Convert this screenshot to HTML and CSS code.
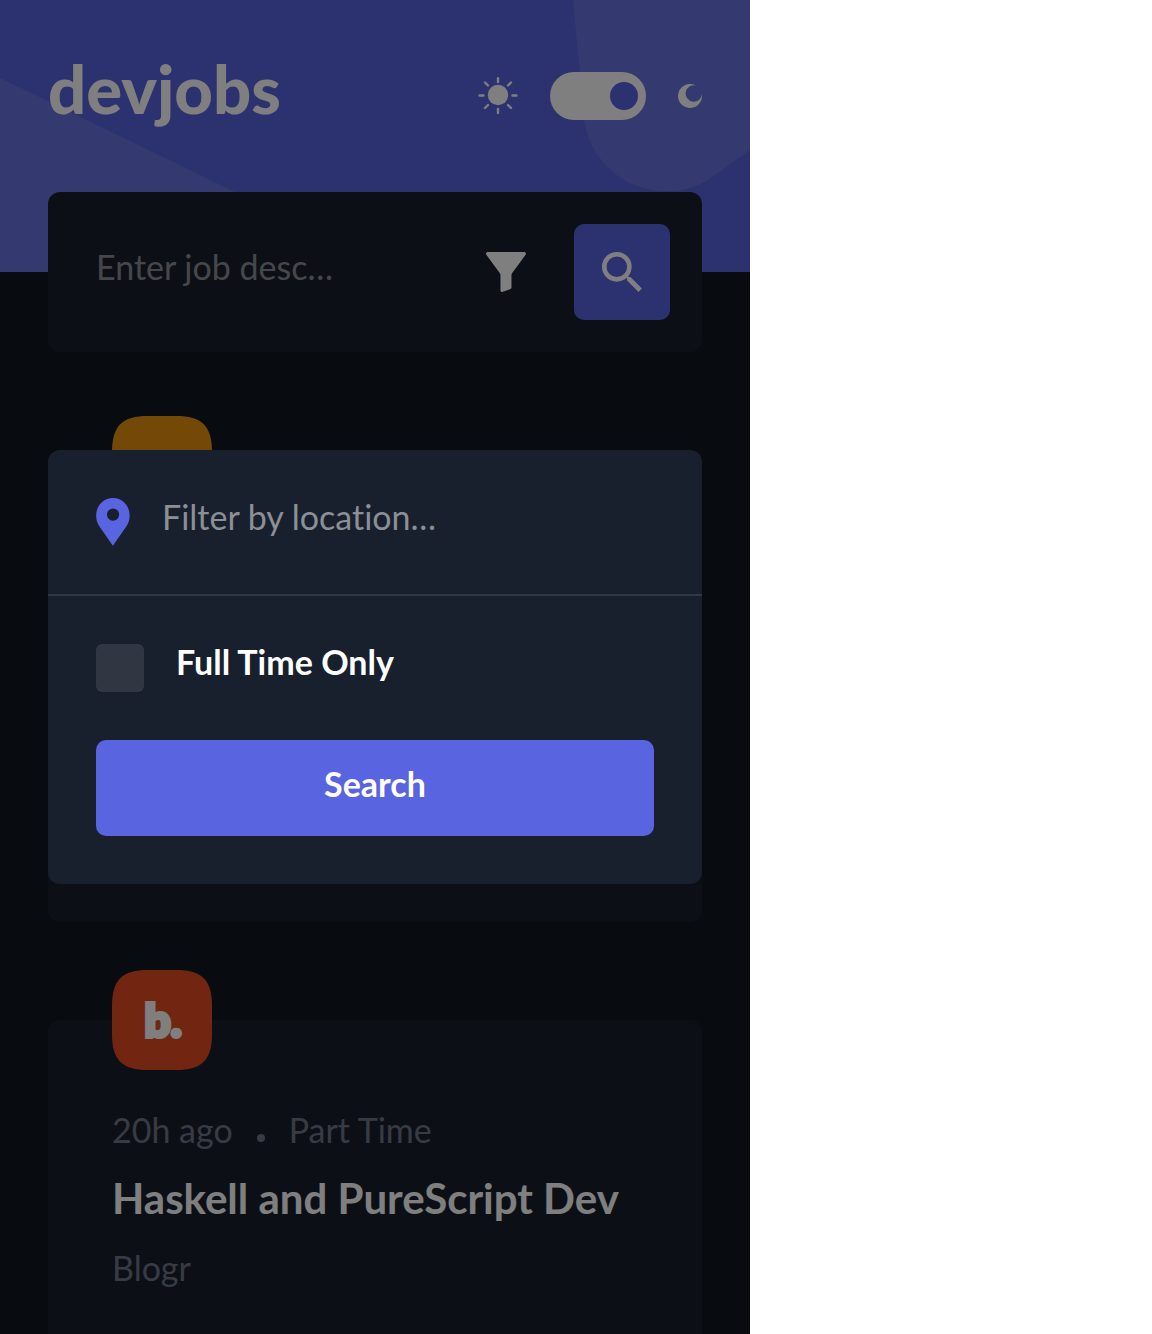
FILE: index.html
```html
<!DOCTYPE html>
<html lang="en">
<head>
<meta charset="utf-8">
<meta name="viewport" content="width=device-width, initial-scale=1">
<title>devjobs</title>
<link rel="stylesheet" href="styles.css">
</head>
<body>
<div class="app">
  <header class="header">
    <svg class="header-pattern" viewBox="0 0 750 272" preserveAspectRatio="none" aria-hidden="true">
      <path d="M0 78L235 192L400 272H0z"/>
      <path d="M573 0L584 118C590 163 625 191 667 191C685 191 697 187 709 179L750 150V0z"/>
    </svg>
    <a class="logo" href="#">devjobs</a>
    <div class="theme">
      <svg class="sun" viewBox="0 0 40 38" aria-hidden="true">
        <circle cx="20" cy="18" r="10.200"/>
        <path d="M20 1.200v3.800M20 32v4M1.500 18.500h4M34.500 18.500h4M7 5.500l3 3M33 5.500l-3 3M7 31l3-3M33 31l-3-3"/>
      </svg>
      <input class="switch" type="checkbox" role="switch" aria-label="Dark mode" checked>
      <svg class="moon" viewBox="0 0 24 24" aria-hidden="true">
        <path d="M18 1.600A12 12 0 1 0 24 12V9.800A8.200 8.200 0 1 1 18 1.600z"/>
      </svg>
    </div>
  </header>

  <main class="content">
    <form class="search">
      <input class="field" type="text" aria-label="Job description" placeholder="Enter job desc…">
      <button class="filter-button" type="button" aria-label="Filters">
        <svg class="icon" viewBox="0 0 20 20" aria-hidden="true"><path d="M19.108 0H.86a.86.86 0 00-.764.455.833.833 0 00.068.884l6.685 9.188.007.01c.243.32.375.708.376 1.107v7.502a.825.825 0 00.248.594.865.865 0 00.942.18l3.756-1.4c.337-.1.56-.41.56-.784v-6.092c0-.399.132-.787.375-1.108l.007-.009 6.685-9.189c.19-.26.22-.6.068-.883A.86.86 0 0019.108 0z"/></svg>
      </button>
      <button class="search-button" type="submit" aria-label="Search jobs">
        <svg class="icon" viewBox="0 0 24 24" aria-hidden="true"><path d="M17.112 15.059h-1.088l-.377-.377a8.814 8.814 0 002.15-5.784A8.898 8.898 0 108.898 17.796c2.211 0 4.230-.808 5.784-2.143l.377.377v1.081l6.845 6.832 2.040-2.040-6.832-6.844zM8.898 15.059a6.161 6.161 0 1 1 0-12.322 6.161 6.161 0 0 1 0 12.322z"/></svg>
      </button>
    </form>

    <article class="job">
      <svg class="company-logo" viewBox="0 0 100 100" aria-hidden="true">
        <path class="amber" d="M0 36C0 10 10 0 36 0H64C90 0 100 10 100 36V64C100 90 90 100 64 100H36C10 100 0 90 0 64z"/>
      </svg>
    </article>

    <article class="job">
      <svg class="company-logo" viewBox="0 0 100 100" aria-hidden="true">
        <path class="red" d="M0 36C0 10 10 0 36 0H64C90 0 100 10 100 36V64C100 90 90 100 64 100H36C10 100 0 90 0 64z"/>
        <text x="51" y="67" text-anchor="middle">b.</text>
      </svg>
      <p class="meta"><span>20h ago</span><i class="dot"></i><span>Part Time</span></p>
      <h2 class="title">Haskell and PureScript Dev</h2>
      <p class="company">Blogr</p>
    </article>
  </main>

  <div class="overlay">
    <form class="dialog" role="dialog" aria-label="Filters">
      <div class="location">
        <svg class="pin" viewBox="0 0 17 24" aria-hidden="true"><path fill-rule="evenodd" d="M14.358 2.451A8.300 8.300 0 008.448 0a8.300 8.300 0 00-5.911 2.451c-2.922 2.925-3.285 8.427-.785 11.760l6.696 9.683 6.686-9.669c2.509-3.347 2.146-8.850-.776-11.774zM8.525 11.364a3.060 3.060 0 01-3.055-3.060 3.060 3.060 0 013.055-3.060 3.060 3.060 0 013.055 3.060 3.060 3.060 0 01-3.055 3.060z"/></svg>
        <input class="field" type="text" aria-label="Location" placeholder="Filter by location…">
      </div>
      <div class="options">
        <label class="full-time"><input class="tick" type="checkbox"><span>Full Time Only</span></label>
        <button class="submit" type="submit">Search</button>
      </div>
    </form>
  </div>
</div>
</body>
</html>
```
FILE: styles.css
```css
* {
  box-sizing: border-box;
  margin: 0;
}

body {
  background: #fff;
  font-family: Lato, "Open Sans", sans-serif;
  font-size: 34px;
  font-variant-ligatures: none;
  line-height: 40px;
}

button,
input {
  border: 0;
  padding: 0;
  font: inherit;
  font-variant-ligatures: none;
  color: #fff;
}

/* The page does not scroll while the filter dialog is open. */
.app {
  position: relative;
  max-width: 750px;
  height: 100vh;
  overflow: hidden;
  background: #10171f;
}

.header {
  position: relative;
  display: flex;
  justify-content: space-between;
  align-items: flex-start;
  height: 272px;
  padding: 48px 48px 0;
  background: #5964e0;
}

.header-pattern {
  position: absolute;
  inset: 0;
  width: 100%;
  height: 100%;
  fill: #6973de;
}

.logo {
  position: relative;
  color: #fff;
  font-size: 67px;
  font-weight: 900;
  line-height: 80px;
  text-decoration: none;
}

.theme {
  position: relative;
  display: flex;
  align-items: center;
  gap: 32px;
  padding-top: 24px;
}

.sun {
  width: 40px;
  height: 38px;
  fill: #fff;
  stroke: #fff;
  stroke-width: 2.4;
  stroke-linecap: round;
}

.sun circle {
  stroke: none;
}

.switch {
  appearance: none;
  display: flex;
  justify-content: flex-end;
  width: 96px;
  height: 48px;
  padding: 10px 8px;
  border-radius: 24px;
  background: #fff;
}

.switch::before {
  content: "";
  width: 28px;
  height: 28px;
  border-radius: 50%;
  background: #5964e0;
}

.moon {
  width: 24px;
  height: 24px;
  fill: #fff;
}

.content {
  position: relative;
  margin-top: -80px;
  padding: 0 48px;
}

.search {
  display: flex;
  align-items: center;
  gap: 48px;
  height: 160px;
  margin-bottom: 114px;
  padding: 0 32px 0 48px;
  border-radius: 12px;
  background: #19202d;
}

.field {
  flex: 1;
  min-width: 0;
  height: 48px;
  padding-bottom: 12px;
  background: transparent;
}

.field::placeholder {
  color: #8c8f96;
  opacity: 1;
}

.icon {
  display: block;
  width: 40px;
  height: 40px;
  fill: #fff;
}

.filter-button {
  background: transparent;
}

.search-button {
  display: grid;
  place-items: center;
  width: 96px;
  height: 96px;
  border-radius: 10px;
  background: #5964e0;
}

.job {
  min-height: 456px;
  margin-bottom: 98px;
  padding: 0 64px;
  border-radius: 12px;
  background: #19202d;
}

/* The logo sits half above the card's top edge. */
.company-logo {
  display: block;
  width: 100px;
  height: 100px;
  margin-bottom: -10px;
  transform: translateY(-50%);
}

.company-logo text {
  fill: #fff;
  stroke: #fff;
  stroke-width: 4;
  font-size: 46px;
  font-weight: 900;
}

.amber {
  fill: #e99210;
}

.red {
  fill: #e44c24;
}

.meta,
.company {
  color: #6e7688;
}

.meta {
  display: flex;
  align-items: center;
  gap: 24px;
}

.dot {
  width: 8px;
  height: 8px;
  margin-top: 16px;
  border-radius: 50%;
  background: #6e7688;
}

.title {
  margin: 22px 0 24px;
  color: #fff;
  font-size: 42px;
  font-weight: 700;
  line-height: 52px;
}

.overlay {
  position: absolute;
  inset: 0;
  display: flex;
  align-items: center;
  padding: 0 48px;
  background: rgba(0, 0, 0, 0.5);
}

.dialog {
  flex: 1;
  min-width: 0;
  border-radius: 12px;
  background: #19202d;
}

.location {
  display: flex;
  align-items: center;
  gap: 32px;
  padding: 48px;
  border-bottom: 2px solid #303642;
}

.pin {
  width: 34px;
  height: 48px;
  fill: #5964e0;
}

.options {
  padding: 48px;
}

.full-time {
  display: flex;
  gap: 32px;
  margin-bottom: 48px;
  color: #fff;
  font-weight: 700;
  line-height: 36px;
}

.tick {
  appearance: none;
  width: 48px;
  height: 48px;
  border-radius: 6px;
  background: #303642;
}

.submit {
  display: block;
  width: 100%;
  height: 96px;
  padding-bottom: 8px;
  border-radius: 10px;
  background: #5964e0;
  font-weight: 700;
}
```
